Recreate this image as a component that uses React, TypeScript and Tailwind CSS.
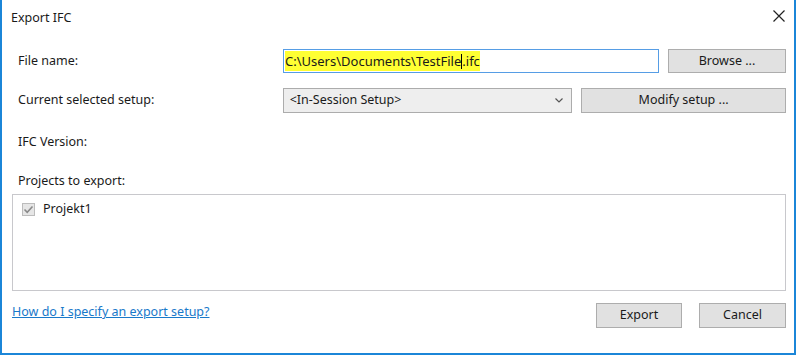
import React from "react";

const font = { fontFamily: '"Noto Sans", "Open Sans", sans-serif' };

function WinButton({ label, className }: { label: string; className: string }) {
  return (
    <div
      className={`flex items-center justify-center bg-[#e1e1e1] border border-[#adadad] text-[12.5px] text-[#1a1a1a] ${className}`}
    >
      {label}
    </div>
  );
}

export default function App() {
  return (
    <div className="w-[800px] h-[355px] bg-white" style={font}>
      <div className="w-[796px] h-[355px] border-l-2 border-r-2 border-b-2 border-[#1b86d8] flex flex-col">
        {/* title bar */}
        <div className="h-[36px] flex items-center justify-between pl-[9px] pr-[8px]">
          <span className="text-[12.5px] text-[#1a1a1a] mt-[1px]">Export IFC</span>
          <svg width="14" height="14" viewBox="0 0 14 14" className="mt-[-4px]">
            <path d="M1.5 1.5 L12.5 12.5 M12.5 1.5 L1.5 12.5" stroke="#222" strokeWidth="1.2" />
          </svg>
        </div>

        <div className="flex flex-col pl-[10px] pr-[8px]">
          {/* file name */}
          <div className="flex items-center h-[24px] mt-[13px]">
            <span className="w-[271px] pl-[6px] text-[12.5px] text-[#1a1a1a]">File name:</span>
            <div className="w-[376px] h-[24px] border border-[#569de5] flex items-center pl-[1px]">
              <span className="bg-[#ffff33] text-[13px] text-[#1a1a1a] leading-[20px] flex items-center">
                C:\Users\Documents\TestFile
                <span className="inline-block w-[1px] h-[15px] bg-black" />
                .ifc
              </span>
            </div>
            <WinButton label="Browse ..." className="ml-[9px] w-[118px] h-[24px]" />
          </div>

          {/* setup */}
          <div className="flex items-center h-[25px] mt-[15px]">
            <span className="w-[271px] pl-[6px] text-[12.5px] text-[#1a1a1a]">Current selected setup:</span>
            <div className="w-[290px] h-[25px] border border-[#acacac] bg-[#eeeeee] flex items-center justify-between pl-[6px] pr-[8px]">
              <span className="text-[12.5px] text-[#1a1a1a]">&lt;In-Session Setup&gt;</span>
              <svg width="8" height="5" viewBox="0 0 8 5">
                <path d="M0.5 0.5 L4 4 L7.5 0.5" stroke="#555" strokeWidth="1.2" fill="none" />
              </svg>
            </div>
            <WinButton label="Modify setup ..." className="ml-[9px] w-[205px] h-[25px] border-[#707070]" />
          </div>

          {/* ifc version */}
          <div className="h-[16px] mt-[21px] flex items-center pl-[6px]">
            <span className="text-[12.5px] text-[#1a1a1a]">IFC Version:</span>
          </div>

          {/* projects */}
          <div className="h-[16px] mt-[23px] flex items-center pl-[6px]">
            <span className="text-[12.5px] text-[#1a1a1a]">Projects to export:</span>
          </div>

          <div className="mt-[5px] w-[774px] h-[97px] border border-[#c8c8cc] flex flex-col pl-[9px] pt-[5px]">
            <div className="flex items-center gap-[8px]">
              <div className="w-[13px] h-[13px] border border-[#bcbcbc] bg-[#e6e6e6] flex items-center justify-center">
                <svg width="11" height="11" viewBox="0 0 11 11">
                  <path d="M1.5 5.5 L4.2 8.3 L9.5 2.5" stroke="#8a8a8a" strokeWidth="1.6" fill="none" />
                </svg>
              </div>
              <span className="text-[12.5px] text-[#1a1a1a]">Projekt1</span>
            </div>
          </div>

          {/* bottom */}
          <div className="flex items-center justify-between h-[25px] mt-[12px]">
            <span className="text-[12.5px] text-[#1979ca] underline mb-[6px]">How do I specify an export setup?</span>
            <div className="flex gap-[17px]">
              <WinButton label="Export" className="w-[86px] h-[25px]" />
              <WinButton label="Cancel" className="w-[87px] h-[25px]" />
            </div>
          </div>
        </div>
      </div>
    </div>
  );
}
